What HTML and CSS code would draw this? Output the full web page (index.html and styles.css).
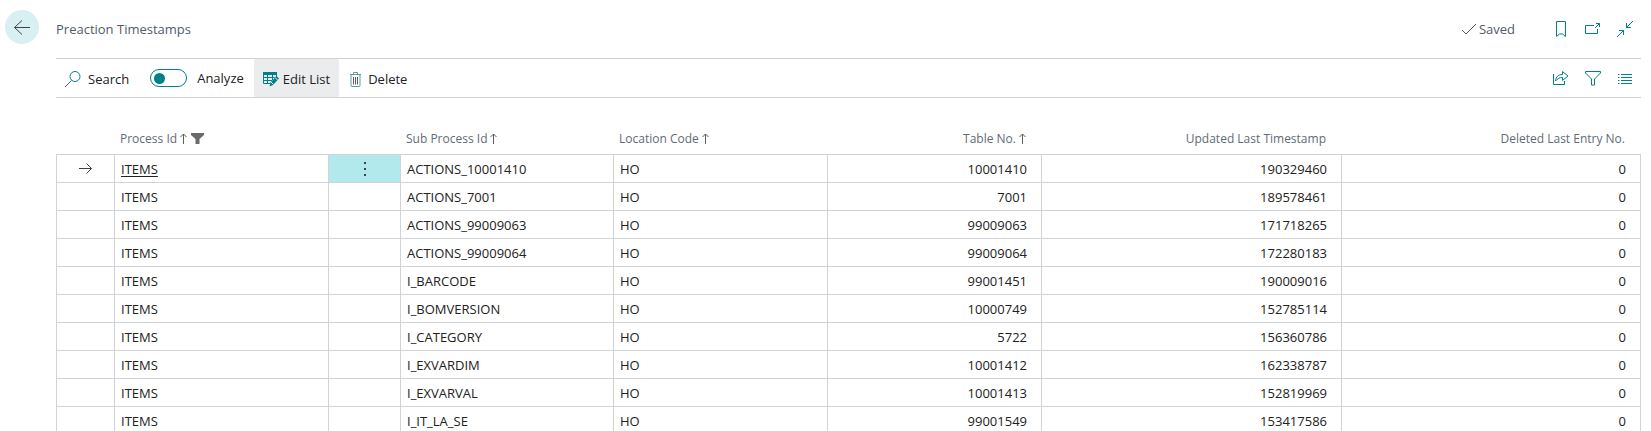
FILE: index.html
```html
<!DOCTYPE html>
<html lang="en">
<head>
<meta charset="utf-8">
<title>Preaction Timestamps</title>
<link rel="stylesheet" href="styles.css">
</head>
<body>
<div class="page">
  <nav class="rail">
    <button class="back" type="button" aria-label="Back">
      <svg width="18" height="18" viewBox="0 0 18 18"><path d="M17 9.500H1.500M9 2.500L1.500 9.500L9 16.500"/></svg>
    </button>
  </nav>
  <main class="main">
    <header class="header">
      <h1 class="title">Preaction Timestamps</h1>
      <div class="status">
        <svg width="16" height="14" viewBox="0 0 16 14"><path d="M1 8l4 4L15 2"/></svg>
        <span>Saved</span>
      </div>
      <div class="actions">
        <button class="icon-button" type="button" aria-label="Bookmark">
          <svg width="18" height="18" viewBox="0 0 18 18"><path d="M4.500 1.500h9v15l-3-2.500h-3l-3 2.500z"/></svg>
        </button>
        <button class="icon-button" type="button" aria-label="Open in new window">
          <svg width="18" height="18" viewBox="0 0 18 18"><path d="M10 5.500H1.500v8h12V9M11 8l4.500-4.500M12 3.500h3.500V7"/></svg>
        </button>
        <button class="icon-button" type="button" aria-label="Collapse">
          <svg width="18" height="18" viewBox="0 0 18 18"><path d="M17 1l-6.500 6.500M10.500 3v4.500H15M1 17l6.500-6.500M3 10.500h4.500V15"/></svg>
        </button>
      </div>
    </header>

    <div class="toolbar" role="toolbar" aria-label="List actions">
      <button class="tool search" type="button">
        <svg width="18" height="18" viewBox="0 0 18 18"><circle cx="11" cy="6.500" r="5"/><path d="M7.500 10.500L1 17" class="ink"/></svg>
        <span>Search</span>
      </button>
      <label class="analyze">
        <input class="toggle" type="checkbox" role="switch">
        <span>Analyze</span>
      </label>
      <button class="tool active" type="button">
        <svg width="16" height="16" viewBox="0 0 16 16"><path d="M0 1h14v3H0z" class="fill"/><path d="M.5 2v10.500h7M13.500 4v2M0 6.500h12M0 9.500h9M4.500 4v9M9.500 4v5"/><path d="M6.500 15.500l1-4 6-6.500 2.500 2.500-6 6.500z" class="fill"/><path d="M8 11l2.500 2.500M12 6.500L14.500 9" class="gap"/></svg>
        <span>Edit List</span>
      </button>
      <button class="tool delete" type="button">
        <svg width="13" height="17" viewBox="0 0 13 17"><path d="M1 3.500h11M4.500 3V1.500h4V3M2 4v10.500q0 1 1 1h7q1 0 1-1V4" class="bin"/><path d="M4.500 6v7.500M6.500 6v7.500M8.500 6v7.500" class="bars"/></svg>
        <span>Delete</span>
      </button>
      <div class="actions">
        <button class="icon-button" type="button" aria-label="Share">
          <svg width="18" height="18" viewBox="0 0 18 18"><path d="M1.500 5v10.500h11V12M3.500 12c.5-4.500 3-6.500 7-6.500V2.500l5.500 4.500-5.500 4.500v-3c-3 0-5 1-7 3.500z"/></svg>
        </button>
        <button class="icon-button" type="button" aria-label="Filter">
          <svg width="18" height="18" viewBox="0 0 18 18"><path d="M1.500 2.500h15v1.500l-6 6v6h-3v-6l-6-6z"/></svg>
        </button>
        <button class="icon-button" type="button" aria-label="Show as list">
          <svg width="18" height="18" viewBox="0 0 18 18"><path d="M2 5.500h1.500M5 5.500h11M2 8.500h1.500M5 8.500h11M2 11.500h1.500M5 11.500h11M2 14.500h1.500M5 14.500h11"/></svg>
        </button>
      </div>
    </div>

    <table class="grid">
      <colgroup>
        <col class="c-select"><col class="c-process"><col class="c-menu"><col class="c-sub">
        <col class="c-wide"><col class="c-wide"><col class="c-stamp"><col class="c-entry">
      </colgroup>
      <thead>
        <tr>
          <th></th>
          <th scope="col">Process Id<svg class="up" width="7" height="11" viewBox="0 0 7 11"><path d="M3.500 11V1M.5 4l3-3 3 3"/></svg><svg class="funnel" width="13" height="11" viewBox="0 0 13 11"><path d="M0 0h13v2L8.500 6v5h-4V6L0 2z"/></svg></th>
          <th></th>
          <th scope="col">Sub Process Id<svg class="up" width="7" height="11" viewBox="0 0 7 11"><path d="M3.500 11V1M.5 4l3-3 3 3"/></svg></th>
          <th scope="col">Location Code<svg class="up" width="7" height="11" viewBox="0 0 7 11"><path d="M3.500 11V1M.5 4l3-3 3 3"/></svg></th>
          <th scope="col" class="num">Table No.<svg class="up" width="7" height="11" viewBox="0 0 7 11"><path d="M3.500 11V1M.5 4l3-3 3 3"/></svg></th>
          <th scope="col" class="num">Updated Last Timestamp</th>
          <th scope="col" class="num">Deleted Last Entry No.</th>
        </tr>
      </thead>
      <tbody>
        <tr><td class="pointer"><svg width="14" height="11" viewBox="0 0 14 11"><path d="M0 5.500h12.500M7.500 .5l5 5-5 5"/></svg></td><td><a class="open" href="#">ITEMS</a></td><td class="current"><button class="more" type="button" aria-label="Show more options"><svg width="2" height="14" viewBox="0 0 2 14"><path d="M0 0h2v2H0zM0 6h2v2H0zM0 12h2v2H0z"/></svg></button></td><td>ACTIONS_10001410</td><td>HO</td><td class="num">10001410</td><td class="num">190329460</td><td class="num">0</td></tr>
        <tr><td></td><td>ITEMS</td><td></td><td>ACTIONS_7001</td><td>HO</td><td class="num">7001</td><td class="num">189578461</td><td class="num">0</td></tr>
        <tr><td></td><td>ITEMS</td><td></td><td>ACTIONS_99009063</td><td>HO</td><td class="num">99009063</td><td class="num">171718265</td><td class="num">0</td></tr>
        <tr><td></td><td>ITEMS</td><td></td><td>ACTIONS_99009064</td><td>HO</td><td class="num">99009064</td><td class="num">172280183</td><td class="num">0</td></tr>
        <tr><td></td><td>ITEMS</td><td></td><td>I_BARCODE</td><td>HO</td><td class="num">99001451</td><td class="num">190009016</td><td class="num">0</td></tr>
        <tr><td></td><td>ITEMS</td><td></td><td>I_BOMVERSION</td><td>HO</td><td class="num">10000749</td><td class="num">152785114</td><td class="num">0</td></tr>
        <tr><td></td><td>ITEMS</td><td></td><td>I_CATEGORY</td><td>HO</td><td class="num">5722</td><td class="num">156360786</td><td class="num">0</td></tr>
        <tr><td></td><td>ITEMS</td><td></td><td>I_EXVARDIM</td><td>HO</td><td class="num">10001412</td><td class="num">162338787</td><td class="num">0</td></tr>
        <tr><td></td><td>ITEMS</td><td></td><td>I_EXVARVAL</td><td>HO</td><td class="num">10001413</td><td class="num">152819969</td><td class="num">0</td></tr>
        <tr><td></td><td>ITEMS</td><td></td><td>I_IT_LA_SE</td><td>HO</td><td class="num">99001549</td><td class="num">153417586</td><td class="num">0</td></tr>
      </tbody>
    </table>
  </main>
</div>
</body>
</html>
```
FILE: styles.css
```css
* { box-sizing: border-box; }

body {
  margin: 0;
  background: #fff;
  color: #212121;
  font: 13px/20px "Open Sans", "Noto Sans", sans-serif;
}

button {
  margin: 0;
  padding: 0;
  border: 0;
  background: none;
  color: inherit;
  font: inherit;
  cursor: pointer;
}

svg {
  display: block;
  flex: none;
  fill: none;
  stroke: #00808a;
}

.page {
  display: grid;
  grid-template-columns: 56px minmax(0, 1fr);
  height: 100vh;
  padding-right: 10px;
  overflow: hidden;
}

.rail { padding: 10px 5px; }

.back {
  display: grid;
  place-items: center;
  width: 34px;
  height: 34px;
  border-radius: 50%;
  background: #d9f0f2;
}
.back svg { stroke: #3c4248; }

.header {
  display: flex;
  align-items: center;
  height: 58px;
}

.title {
  margin: 0;
  color: #505c6d;
  font-size: 13px;
  font-weight: 400;
}

.status {
  display: flex;
  align-items: center;
  gap: 2px;
  margin-left: auto;
  margin-right: 37px;
  color: #505c6d;
}
.status svg { stroke: #505c6d; }

.actions {
  display: flex;
  gap: 14px;
  padding-right: 7px;
}

.icon-button { width: 18px; height: 18px; }

.toolbar {
  display: flex;
  align-items: stretch;
  height: 40px;
  border-top: 1px solid #d0d2d5;
  border-bottom: 1px solid #d0d2d5;
}
.toolbar .actions { align-items: center; margin-left: auto; }

.tool {
  display: flex;
  align-items: center;
  gap: 4px;
  padding: 2px 9px 0;
}
.tool.search { gap: 6px; padding: 2px 8px 0; }
.tool.active { background: #ebecee; border-radius: 2px; }
.tool.delete { gap: 6px; padding-left: 10px; }
.tool .ink { stroke: #505c6d; }
.tool .fill { fill: #00808a; stroke: none; }
.tool .gap { stroke: #ebecee; }
.tool .bin { stroke: #5a9aa0; }
.tool .bars { stroke: #505c6d; }

.analyze {
  display: flex;
  align-items: center;
  gap: 10px;
  padding: 0 10px 0 13px;
}

.toggle {
  appearance: none;
  display: flex;
  align-items: center;
  width: 37px;
  height: 18px;
  margin: 0;
  padding: 0 3px;
  border: 1px solid #00808a;
  border-radius: 9px;
}
.toggle::before {
  content: "";
  width: 11px;
  height: 11px;
  border-radius: 50%;
  background: #00808a;
}
.toggle:checked { justify-content: flex-end; }

.grid {
  width: 100%;
  table-layout: fixed;
  border-collapse: separate;
  border-spacing: 0;
}
.c-select { width: 59px; }
.c-process, .c-wide { width: 214px; }
.c-menu { width: 72px; }
.c-sub { width: 213px; }
.c-stamp { width: 300px; }
.c-entry { width: 299px; }

.grid th {
  height: 57px;
  padding: 26px 16px 0 5px;
  border-bottom: 1px solid #d0d4d9;
  color: #5f6b77;
  font-size: 12px;
  font-weight: 400;
  text-align: left;
  white-space: nowrap;
}
.grid td {
  height: 28px;
  padding: 0 14px 0 6px;
  border-right: 1px solid #d0d4d9;
  border-bottom: 1px solid #d0d4d9;
}
.grid td:first-child { border-left: 1px solid #d0d4d9; }
.grid .num { text-align: right; }
.grid th svg { display: inline-block; vertical-align: -1px; }
.grid .up { margin-left: 3px; stroke: #5c5c5c; }
.grid .funnel { margin-left: 4px; fill: #6b6b6b; stroke: none; }

.pointer svg { margin: 0 auto; stroke: #3c4248; }
.grid .pointer { padding: 0; }

.open { color: inherit; text-underline-offset: 2px; }

.grid .current { padding: 0; background: #b2e9ec; }
.more {
  display: grid;
  place-items: center;
  width: 100%;
  height: 27px;
}
.more svg { fill: #3c4248; stroke: none; }
```
